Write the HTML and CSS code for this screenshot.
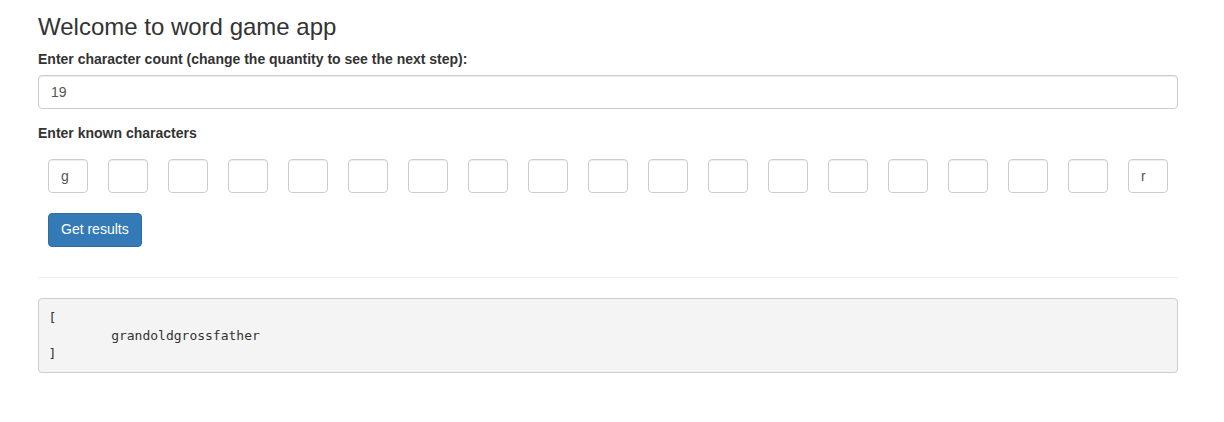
FILE: index.html
```html
<!DOCTYPE html>
<html lang="en">
<head>
<meta charset="utf-8">
<title>Word game</title>
<link rel="stylesheet" href="styles.css">
</head>
<body>
<div class="container">
  <h3 class="title">Welcome to word game app</h3>
  <div class="form-group">
    <label class="label" for="count">Enter character count (change the quantity to see the next step):</label>
    <input id="count" class="form-control" type="text" value="19">
  </div>
  <div class="form-group">
    <label class="label">Enter known characters</label>
    <div class="chars">
      <input class="char" type="text" value="g">
      <input class="char" type="text" value="">
      <input class="char" type="text" value="">
      <input class="char" type="text" value="">
      <input class="char" type="text" value="">
      <input class="char" type="text" value="">
      <input class="char" type="text" value="">
      <input class="char" type="text" value="">
      <input class="char" type="text" value="">
      <input class="char" type="text" value="">
      <input class="char" type="text" value="">
      <input class="char" type="text" value="">
      <input class="char" type="text" value="">
      <input class="char" type="text" value="">
      <input class="char" type="text" value="">
      <input class="char" type="text" value="">
      <input class="char" type="text" value="">
      <input class="char" type="text" value="">
      <input class="char" type="text" value="r">
    </div>
  </div>
  <div class="actions">
    <button class="btn btn-primary" type="button">Get results</button>
  </div>
  <hr class="divider">
  <pre class="result">[
	grandoldgrossfather
]</pre>
</div>
</body>
</html>
```
FILE: styles.css
```css
* { box-sizing: border-box; }
html, body { margin: 0; padding: 0; }
body {
  font-family: "Liberation Sans", Arial, sans-serif;
  font-size: 14px;
  line-height: 1.42857;
  color: #333;
  background: #fff;
}
.container {
  width: 1140px;
  margin-left: 38px;
}
.title {
  font-size: 24px;
  font-weight: 500;
  line-height: 1.1;
  margin: 14px 0 10px;
}
.form-group { margin-bottom: 15px; }
.label {
  display: inline-block;
  font-weight: bold;
  margin-bottom: 5px;
}
.form-control {
  display: block;
  width: 100%;
  height: 34px;
  padding: 6px 12px;
  font-family: inherit;
  font-size: 14px;
  color: #555;
  border: 1px solid #ccc;
  border-radius: 4px;
  box-shadow: inset 0 1px 1px rgba(0,0,0,.075);
  background: #fff;
}
.chars {
  display: flex;
  padding-top: 10px;
}
.char {
  width: 40px;
  height: 34px;
  margin: 0 10px;
  padding: 6px 12px;
  font-family: inherit;
  font-size: 14px;
  color: #555;
  border: 1px solid #ccc;
  border-radius: 4px;
  box-shadow: inset 0 1px 1px rgba(0,0,0,.075);
  background: #fff;
}
.actions { padding-left: 10px; padding-top: 5px; }
.btn {
  display: inline-block;
  height: 34px;
  padding: 6px 12px;
  font-family: inherit;
  font-size: 14px;
  line-height: 1.42857;
  border: 1px solid transparent;
  border-radius: 4px;
}
.btn-primary {
  color: #fff;
  background: #337ab7;
  border-color: #2e6da4;
}
.divider {
  margin: 30px 0 20px;
  border: 0;
  border-top: 1px solid #eee;
}
.result {
  margin: 0;
  padding: 9.5px;
  font-family: "DejaVu Sans Mono", "Liberation Mono", monospace;
  font-size: 13px;
  line-height: 18px;
  color: #333;
  background: #f4f4f4;
  border: 1px solid #ccc;
  border-radius: 4px;
  tab-size: 8;
}
```
